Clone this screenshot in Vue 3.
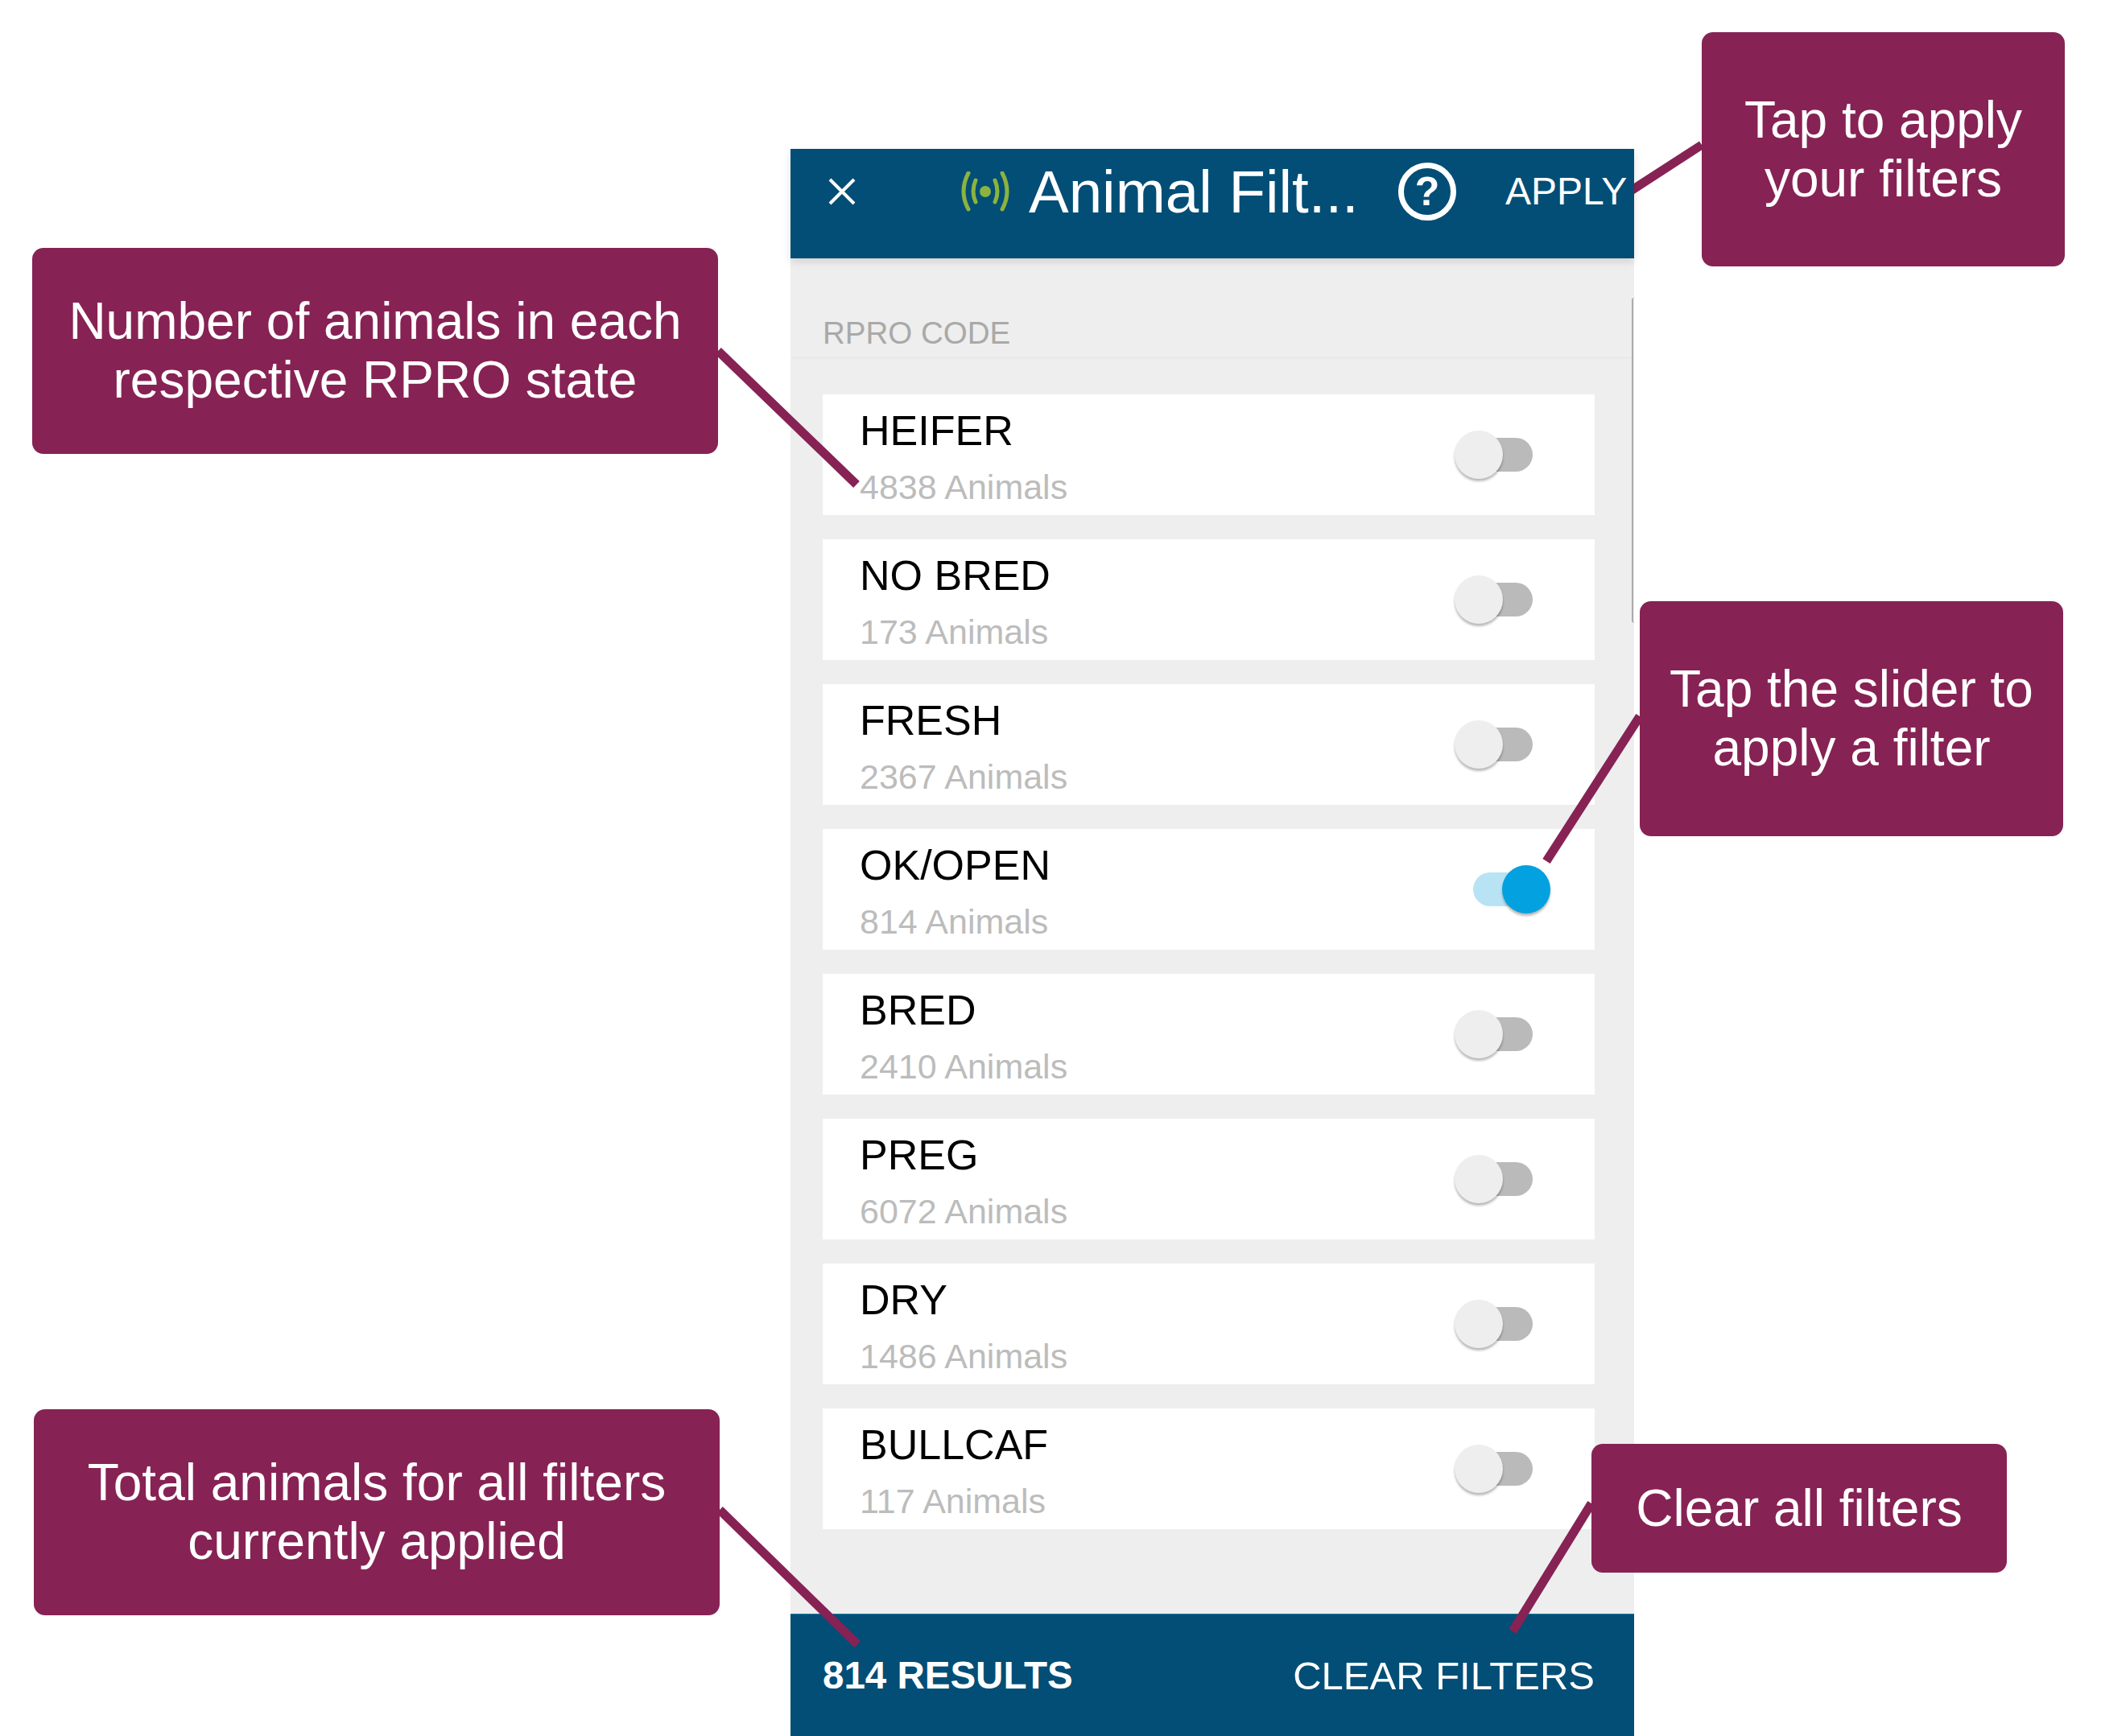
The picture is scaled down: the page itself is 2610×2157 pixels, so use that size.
<script setup>
const rows = [
  { name: 'HEIFER', count: 4838 },
  { name: 'NO BRED', count: 173 },
  { name: 'FRESH', count: 2367 },
  { name: 'OK/OPEN', count: 814, on: true },
  { name: 'BRED', count: 2410 },
  { name: 'PREG', count: 6072 },
  { name: 'DRY', count: 1486 },
  { name: 'BULLCAF', count: 117 }
]
const lines = [
  [2114, 180, 2023, 239],
  [892, 436, 1064, 602],
  [2037, 890, 1921, 1070],
  [894, 1876, 1065, 2043],
  [1977, 1868, 1879, 2027]
]
</script>

<template>
  <div class="page">
    <section class="phone">
      <header class="top">
        <svg class="close" viewBox="0 0 34 34" aria-label="Close">
          <path d="M2 2L32 32M32 2L2 32" />
        </svg>
        <svg class="signal" viewBox="0 0 64 50" aria-label="Online">
          <path d="M11 2Q-1 25 11 47M53 2Q65 25 53 47M20 11Q14 25 20 38M44 11Q50 25 44 38" />
          <circle cx="32" cy="25" r="7" />
        </svg>
        <h1 class="title">Animal Filt...</h1>
        <span class="help">?</span>
        <span class="apply">APPLY</span>
      </header>

      <main class="body">
        <div class="label"><span>RPRO CODE</span></div>
        <ul class="list">
          <li v-for="row in rows" :key="row.name" class="row">
            <div class="copy">
              <div class="name">{{ row.name }}</div>
              <div class="count">{{ row.count }} Animals</div>
            </div>
            <div class="switch" :class="{ on: row.on }">
              <span class="track"></span>
              <span class="thumb"></span>
            </div>
          </li>
        </ul>
        <span class="scrollbar"></span>
      </main>

      <footer class="bottom">
        <span class="results">814 RESULTS</span>
        <span class="clear">CLEAR FILTERS</span>
      </footer>
    </section>

    <svg class="connectors" viewBox="0 0 2610 2157">
      <line v-for="(l, i) in lines" :key="i" :x1="l[0]" :y1="l[1]" :x2="l[2]" :y2="l[3]" />
    </svg>

    <div class="note n1">Tap to apply<br />your filters</div>
    <div class="note n2">Number of animals in each<br />respective RPRO state</div>
    <div class="note n3">Tap the slider to<br />apply a filter</div>
    <div class="note n4">Total animals for all filters<br />currently applied</div>
    <div class="note n5">Clear all filters</div>
  </div>
</template>

<style scoped>
.page {
  position: relative;
  width: 2610px;
  height: 2157px;
  box-sizing: border-box;
  padding: 185px 580px 0 982px;
  background: #fff;
  overflow: hidden;
  font-family: "Liberation Sans", sans-serif;
}
.phone {
  display: flex;
  flex-direction: column;
  height: 1972px;
}
.top {
  position: relative;
  z-index: 1;
  display: flex;
  flex: none;
  align-items: center;
  box-sizing: border-box;
  height: 136px;
  padding-bottom: 30px;
  background: #024e76;
  box-shadow: 0 4px 10px rgba(0, 0, 0, 0.12);
  color: #fff;
}
.top > * {
  flex: none;
}
.close {
  width: 34px;
  height: 34px;
  margin-left: 47px;
  fill: none;
  stroke: #fff;
  stroke-width: 4;
}
.signal {
  width: 64px;
  height: 50px;
  margin-left: 129px;
  fill: none;
  stroke: #8cb33f;
  stroke-width: 5;
  stroke-linecap: round;
}
.signal circle {
  fill: #8cb33f;
  stroke: none;
}
.title {
  width: 459px;
  margin: 0 0 0 22px;
  font-size: 74.5px;
  font-weight: 400;
  white-space: nowrap;
}
.help {
  display: flex;
  align-items: center;
  justify-content: center;
  box-sizing: border-box;
  width: 72px;
  height: 72px;
  border: 7px solid #fff;
  border-radius: 50%;
  font-size: 50px;
  font-weight: 700;
}
.apply {
  margin-left: 61px;
  font-size: 48px;
  line-height: 60px;
}
.body {
  position: relative;
  flex: 1;
  background: #eee;
}
.label {
  display: flex;
  align-items: flex-end;
  box-sizing: border-box;
  height: 124px;
  padding: 0 0 10px 40px;
  border-bottom: 1px solid #e4e4e4;
  color: #a9a9a9;
  font-size: 38.5px;
  line-height: 40px;
}
.list {
  display: flex;
  flex-direction: column;
  gap: 30px;
  margin: 45px 49px 0 40px;
  padding: 0;
  list-style: none;
}
.row {
  display: flex;
  align-items: center;
  justify-content: space-between;
  height: 150px;
  padding: 0 55px 0 46px;
  background: #fff;
}
.copy {
  display: flex;
  flex-direction: column;
  height: 150px;
  padding-top: 10px;
  box-sizing: border-box;
}
.name {
  color: #000;
  font-size: 52px;
  line-height: 70px;
}
.count {
  color: #bcbcbc;
  font-size: 43px;
  line-height: 70px;
}
.switch {
  position: relative;
  width: 119px;
  height: 60px;
  margin-top: -1px;
}
.track {
  position: absolute;
  top: 9px;
  left: 23px;
  width: 74px;
  height: 42px;
  border-radius: 21px;
  background: #bababa;
}
.thumb {
  position: absolute;
  top: 0;
  left: 0;
  width: 60px;
  height: 60px;
  border-radius: 50%;
  background: #eee;
  box-shadow: 0 3px 3px rgba(0, 0, 0, 0.28);
}
.switch.on .track {
  background: #b8e3f5;
}
.switch.on .thumb {
  left: 59px;
  background: #03a1df;
}
.scrollbar {
  position: absolute;
  top: 49px;
  right: 0;
  width: 3px;
  height: 404px;
  border-left: 2px solid #ababab;
  border-radius: 6px 0 0 6px;
  box-sizing: border-box;
}
.bottom {
  display: flex;
  flex: none;
  align-items: center;
  justify-content: space-between;
  height: 152px;
  padding: 0 49px 0 40px;
  background: #024e76;
  border-top: 1px solid #0a7d9c;
  box-sizing: border-box;
  color: #fff;
}
.results {
  font-size: 47.5px;
  font-weight: 700;
}
.clear {
  font-size: 49px;
}
.connectors {
  position: absolute;
  top: 0;
  left: 0;
  width: 2610px;
  height: 2157px;
  stroke: #872254;
  stroke-width: 11;
}
.note {
  position: absolute;
  display: flex;
  align-items: center;
  justify-content: center;
  box-sizing: border-box;
  border-radius: 14px;
  background: #872254;
  color: #fff;
  font-size: 64px;
  line-height: 73px;
  text-align: center;
}
.n1 { left: 2114px; top: 40px; width: 451px; height: 291px; }
.n2 { left: 40px; top: 308px; width: 852px; height: 256px; }
.n3 { left: 2037px; top: 747px; width: 526px; height: 292px; }
.n4 { left: 42px; top: 1751px; width: 852px; height: 256px; }
.n5 { left: 1977px; top: 1794px; width: 516px; height: 160px; }
</style>
